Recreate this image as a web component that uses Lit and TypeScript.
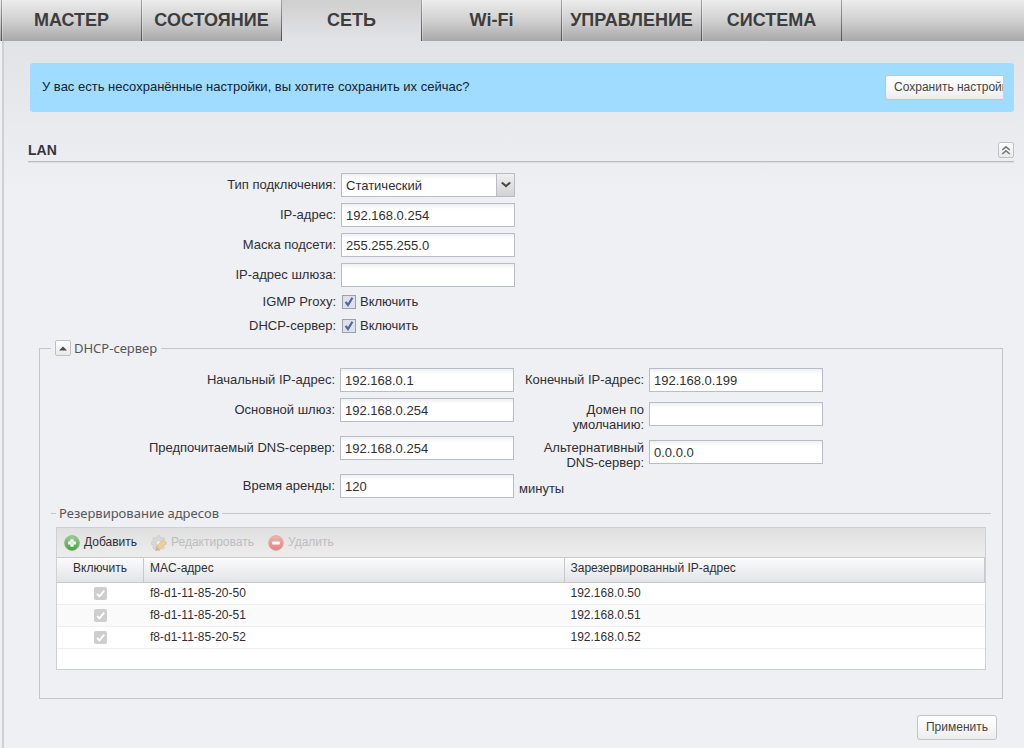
import { LitElement, html, css, svg, nothing } from "lit";
import { customElement, property, state } from "lit/decorators.js";
import { classMap } from "lit/directives/class-map.js";

interface Reservation {
  mac: string;
  ip: string;
}

const TABS = ["МАСТЕР", "СОСТОЯНИЕ", "СЕТЬ", "Wi-Fi", "УПРАВЛЕНИЕ", "СИСТЕМА"];

const RESERVATIONS: Reservation[] = [
  { mac: "f8-d1-11-85-20-50", ip: "192.168.0.50" },
  { mac: "f8-d1-11-85-20-51", ip: "192.168.0.51" },
  { mac: "f8-d1-11-85-20-52", ip: "192.168.0.52" },
];

const addIcon = svg`
  <svg class="icon" viewBox="0 0 16 16" aria-hidden="true">
    <defs><linearGradient id="ga" x1="0" y1="0" x2="0" y2="1"><stop offset="0" stop-color="#9fcf99"/><stop offset="1" stop-color="#459f40"/></linearGradient></defs>
    <circle cx="8" cy="8" r="7.4" fill="url(#ga)" stroke="#7fb87b" stroke-width=".8"/>
    <path d="M6.4 4.2h3.2v2.2h2.2v3.2H9.6v2.2H6.4V9.6H4.2V6.4h2.2z" fill="#fff"/>
    <path d="M7.4 6.2h1.2v1.2h1.2v1.2H8.6v1.2H7.4V8.6H6.2V7.4h1.2z" fill="#c3e4bf"/>
  </svg>`;

const editIcon = svg`
  <svg class="icon" viewBox="0 0 16 16" aria-hidden="true">
    <path d="M6.6.8h2.2l.4 1.8 1.3.6 1.6-1 1.6 1.6-1 1.6.6 1.3 1.8.4v2.2l-1.8.4-.6 1.3 1 1.6-1.6 1.6-1.6-1-1.3.6-.4 1.8H6.6l-.4-1.8-1.3-.6-1.6 1-1.6-1.6 1-1.6-.6-1.3-1.8-.4V7.1l1.8-.4.6-1.3-1-1.6 1.6-1.6 1.6 1 1.3-.6z" fill="#d8d8d6" stroke="#c6c6c4" stroke-width=".7"/>
    <circle cx="7.5" cy="8" r="2.4" fill="#efefed" stroke="#c8c8c6" stroke-width=".6"/>
    <path d="M12.2 4.4l3.2 3.2-6.6 6.6-4.2 1.4 1-4.4z" fill="#efcf96" stroke="#dcbb85" stroke-width=".7"/>
    <path d="M5.6 11.2l3.2 3-4.2 1.4z" fill="#c9b39c"/>
  </svg>`;

const removeIcon = svg`
  <svg class="icon" viewBox="0 0 16 16" aria-hidden="true">
    <defs><linearGradient id="gr" x1="0" y1="0" x2="0" y2="1"><stop offset="0" stop-color="#eeb5b1"/><stop offset="1" stop-color="#e2837d"/></linearGradient></defs>
    <circle cx="8" cy="8" r="7.4" fill="url(#gr)" stroke="#e5a7a3" stroke-width=".8"/>
    <rect x="4.2" y="6.6" width="7.6" height="2.8" rx=".6" fill="#fff"/>
  </svg>`;

@customElement("app-root")
export class AppRoot extends LitElement {
  @state() private tab = "СЕТЬ";
  @property({ attribute: false }) reservations = RESERVATIONS;

  static styles = css`
    * {
      box-sizing: border-box;
    }
    :host {
      display: flex;
      flex-direction: column;
      min-height: 100vh;
      font: 13px/15px "Liberation Sans", Arial, sans-serif;
      color: #2f2f33;
      background: #eef0f4;
    }
    button,
    input,
    select {
      font: inherit;
      color: inherit;
      margin: 0;
    }
    .tabs {
      display: flex;
      height: 41px;
      background: linear-gradient(#ececec, #d0d0d0 50%, #a8a8a8);
    }
    .tabs::before {
      content: "";
      box-sizing: border-box;
      flex: 0 0 2px;
      border-right: 1px solid;
      border-image: linear-gradient(#a8a8a8, #4c4c4c) 1;
      border-image-width: 0 1px 0 0;
    }
    .tab {
      flex: 0 1 140px;
      min-width: 0;
      border: 0;
      border-right: 1px solid;
      border-image: linear-gradient(#a8a8a8, #4c4c4c) 1;
      border-image-width: 0 1px 0 0;
      padding: 0;
      background: none;
      box-shadow: inset 1px 0 #ffffff50;
      font-size: 18px;
      line-height: 38px;
      padding-bottom: 1px;
      font-weight: bold;
      color: #3d3d3d;
      white-space: nowrap;
    }
    .active {
      background: linear-gradient(#cfcfcf, #e3e4e8);
      box-shadow: none;
    }
    .page {
      flex: 1;
      margin-left: 2px;
      border-left: 2px solid #cfd0d5;
      padding: 22px 10px 9px 24px;
      background: linear-gradient(#e2e3e7, #eef0f4 150px);
    }
    .banner {
      display: flex;
      justify-content: space-between;
      align-items: flex-start;
      height: 49px;
      margin-left: 2px;
      padding: 12px 11px 0 12px;
      border-radius: 3px;
      background: #9fdcff;
      color: #17222c;
    }
    .message {
      margin: 0;
      line-height: 24px;
    }
    .clip {
      width: 118px;
      overflow: hidden;
    }
    .push {
      height: 25px;
      padding: 0 8px;
      border: 1px solid #c3c4c8;
      border-radius: 3px;
      background: linear-gradient(#fff, #f8f8f8 50%, #ececec);
      font-size: 12px;
      color: #444;
      white-space: nowrap;
    }
    .heading {
      display: flex;
      justify-content: space-between;
      align-items: center;
      height: 23px;
      margin-top: 27px;
      border-bottom: 1px solid #b9bbc1;
      box-shadow: 0 1px #dcdde2;
    }
    h2 {
      margin: 0;
      font-size: 14px;
      color: #35363a;
    }
    .tool {
      display: grid;
      place-items: center;
      width: 16px;
      height: 16px;
      padding: 0;
      border: 1px solid #bfc1c5;
      border-radius: 2px;
      background: linear-gradient(#fff, #e9e9ea);
    }
    .lan {
      display: grid;
      grid-template-columns: 308px 174px;
      gap: 6px 5px;
      margin-top: 11px;
    }
    .lan label,
    .dhcp label {
      align-self: start;
      padding-top: 4px;
      text-align: right;
    }
    .field {
      width: 100%;
      height: 24px;
      padding: 0 4px;
      border: 1px solid #b9bcc6;
      border-radius: 0;
      outline: 0;
      background: linear-gradient(#eeeff0, #fff 5px);
    }
    .combo {
      display: grid;
      grid-template-columns: 1fr 19px;
    }
    .combo select {
      grid-area: 1 / 1 / 2 / 3;
      appearance: none;
    }
    .trigger {
      grid-area: 1 / 2;
      display: grid;
      place-items: center;
      border: 1px solid #b9bcc6;
      background: linear-gradient(#f0f0f0, #d2d2d4);
      pointer-events: none;
    }
    .checks {
      display: grid;
      grid-template-columns: 308px auto;
      column-gap: 6px;
      margin-top: 3px;
      line-height: 24px;
    }
    .checks .name {
      text-align: right;
    }
    .checks label {
      display: flex;
      align-items: center;
      gap: 4px;
    }
    .tick {
      appearance: none;
      width: 14px;
      height: 14px;
      border: 1px solid #9c9fa6;
      background: #e1e4ec;
    }
    .tick:checked {
      background: #dde1eb
        url("data:image/svg+xml,%3Csvg xmlns='http://www.w3.org/2000/svg' viewBox='0 0 12 12'%3E%3Cpath d='M2.6 5.8L5 9 9.4 1.8' fill='none' stroke='%234f66a8' stroke-width='2.2'/%3E%3C/svg%3E");
    }
    fieldset {
      min-width: 0;
      margin: 0;
      padding: 0;
      border: 1px solid #c3c6cf;
    }
    legend {
      display: flex;
      align-items: center;
      gap: 3px;
      padding: 0 4px;
      font: 13px/18px "Noto Sans", Tahoma, sans-serif;
      color: #55565a;
    }
    .server {
      margin: 1px 11px 0;
      padding: 11px 11px 28px;
    }
    .reserve > legend {
      padding: 0 3px;
    }
    .dhcp {
      display: grid;
      grid-template-columns: 284px 174px 125px 174px;
      grid-template-rows: 24px 32px 32px 24px;
      gap: 6px 5px;
    }
    .dhcp .field {
      align-self: start;
    }
    .dhcp .second {
      padding-left: 16px;
    }
    .dhcp .low {
      align-self: center;
    }
    .unit {
      align-self: end;
      padding-bottom: 2px;
    }
    .reserve {
      margin-top: 6px;
      border-width: 1px 0 0;
      padding: 5px 5px 0;
    }
    .grid {
      height: 143px;
      border: 1px solid #cfd0d2;
      background: #fff;
      font-size: 12px;
    }
    .bar {
      display: flex;
      align-items: center;
      gap: 14px;
      height: 29px;
      padding-left: 7px;
      background: linear-gradient(#e0e0e0, #ededed);
    }
    .action {
      display: flex;
      align-items: center;
      gap: 4px;
      border: 0;
      padding: 0;
      background: none;
    }
    .action:disabled {
      color: #bdbdbf;
    }
    .icon {
      width: 16px;
      height: 16px;
    }
    table {
      width: 100%;
      border-collapse: separate;
      border-spacing: 0;
      table-layout: fixed;
    }
    th {
      height: 26px;
      padding: 0 6px 3px;
      border: solid #c6c8ca;
      border-width: 1px 1px 1px 0;
      background: linear-gradient(#fbfbfb, #e2e4e7);
      font-weight: normal;
      text-align: left;
    }
    td {
      height: 22px;
      padding: 0 6px;
      border-bottom: 1px solid #efefef;
    }
    td:first-child,
    th:first-child {
      width: 87px;
      text-align: center;
    }
    tr:nth-child(even) td {
      background: #fafafa;
    }
    td input {
      appearance: none;
      display: block;
      width: 13px;
      height: 13px;
      margin: 0 auto;
      border-radius: 2px;
      background: #cecece
        url("data:image/svg+xml,%3Csvg xmlns='http://www.w3.org/2000/svg' viewBox='0 0 13 13'%3E%3Cpath d='M3 6.8l2.5 2.5L10.2 3.6' fill='none' stroke='%23fff' stroke-width='1.9'/%3E%3C/svg%3E");
    }
    .footer {
      display: flex;
      justify-content: flex-end;
      margin-top: 16px;
      padding-right: 17px;
    }
  `;

  private textField(id: string, value: string, extra = "") {
    return html`<input class="field ${extra}" id=${id} type="text" .value=${value} />`;
  }

  private check(id: string, name: string) {
    return html`
      <span class="name" id=${id}>${name}</span>
      <label><input class="tick" type="checkbox" checked aria-describedby=${id} />Включить</label>
    `;
  }

  render() {
    return html`
      <nav class="tabs">
        ${TABS.map(
          (name) => html`<button
            class=${classMap({ tab: true, active: name === this.tab })}
            aria-current=${name === this.tab ? "page" : nothing}
            @click=${() => (this.tab = name)}
          >${name}</button>`
        )}
      </nav>
      <main class="page">
        <div class="banner">
          <p class="message">У вас есть несохранённые настройки, вы хотите сохранить их сейчас?</p>
          <div class="clip"><button class="push">Сохранить настройки</button></div>
        </div>

        <header class="heading">
          <h2>LAN</h2>
          <button class="tool" aria-label="Свернуть LAN">
            <svg width="10" height="10" viewBox="0 0 10 10" fill="none" stroke="#77797d" stroke-width="1.6">
              <path d="M1.2 5L5 1.8 8.8 5M1.2 9L5 5.8 8.8 9" />
            </svg>
          </button>
        </header>

        <div class="lan">
          <label for="type">Тип подключения:</label>
          <div class="combo">
            <select class="field" id="type"><option>Статический</option></select>
            <span class="trigger">
              <svg width="10" height="8" viewBox="0 0 10 8" fill="none" stroke="#4b4b4d" stroke-width="2.2">
                <path d="M.8 1.5L5 5l4.2-3.5" />
              </svg>
            </span>
          </div>
          <label for="ip">IP-адрес:</label>${this.textField("ip", "192.168.0.254")}
          <label for="mask">Маска подсети:</label>${this.textField("mask", "255.255.255.0")}
          <label for="gw">IP-адрес шлюза:</label>${this.textField("gw", "")}
        </div>
        <div class="checks">
          ${this.check("igmp", "IGMP Proxy:")} ${this.check("dhcp", "DHCP-сервер:")}
        </div>

        <fieldset class="server">
          <legend>
            <button class="tool" aria-label="Свернуть DHCP-сервер">
              <svg width="8" height="5" viewBox="0 0 8 5"><path d="M0 4.5L4 .5l4 4z" fill="#4a4b4e" /></svg>
            </button>
            DHCP-сервер
          </legend>
          <div class="dhcp">
            <label for="start">Начальный IP-адрес:</label>${this.textField("start", "192.168.0.1")}
            <label for="end">Конечный IP-адрес:</label>${this.textField("end", "192.168.0.199")}
            <label for="main">Основной шлюз:</label>${this.textField("main", "192.168.0.254")}
            <label class="second" for="domain">Домен по умолчанию:</label>${this.textField("domain", "", "low")}
            <label for="dns1">Предпочитаемый DNS-сервер:</label>${this.textField("dns1", "192.168.0.254")}
            <label class="second" for="dns2">Альтернативный DNS-сервер:</label>${this.textField("dns2", "0.0.0.0", "low")}
            <label for="lease">Время аренды:</label>${this.textField("lease", "120")}
            <span class="unit">минуты</span>
          </div>

          <fieldset class="reserve">
            <legend>Резервирование адресов</legend>
            <div class="grid">
              <div class="bar">
                <button class="action">${addIcon}Добавить</button>
                <button class="action" disabled>${editIcon}Редактировать</button>
                <button class="action" disabled>${removeIcon}Удалить</button>
              </div>
              <table>
                <thead>
                  <tr><th>Включить</th><th>MAC-адрес</th><th>Зарезервированный IP-адрес</th></tr>
                </thead>
                <tbody>
                  ${this.reservations.map(
                    (r) => html`<tr>
                      <td><input type="checkbox" checked disabled aria-label=${r.mac} /></td>
                      <td>${r.mac}</td>
                      <td>${r.ip}</td>
                    </tr>`
                  )}
                </tbody>
              </table>
            </div>
          </fieldset>
        </fieldset>

        <div class="footer"><button class="push">Применить</button></div>
      </main>
    `;
  }
}
